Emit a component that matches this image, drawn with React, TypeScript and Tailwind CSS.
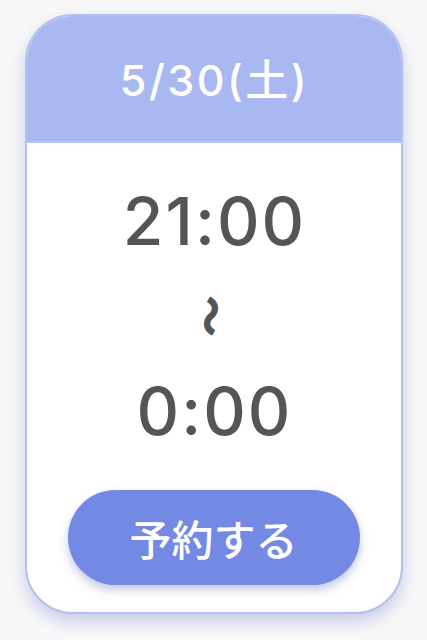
export default function App() {
  return (
    <div
      className="w-[427px] h-[640px] bg-[#f8f8f9] flex justify-center pt-[14px] overflow-hidden antialiased [font-feature-settings:'calt'_0]"
      style={{ fontFamily: 'Inter, "Noto Sans CJK JP", sans-serif' }}
    >
      <div className="w-[378px] h-[600px] rounded-[48px] border-2 border-[#b3bfee] bg-white overflow-hidden flex flex-col shadow-[0_8px_16px_rgba(110,125,200,0.35)]">
        <div className="h-[127px] bg-[#a9b8f1] flex items-center justify-center border-b-2 border-[#b6c2f0] shrink-0">
          <span className="text-white text-[43px] leading-none font-medium tracking-[2.5px] pl-[2px] mt-[4px]">5/30(土)</span>
        </div>
        <div className="flex-1 flex flex-col items-center">
          <div className="mt-[43px] h-[70px] text-[#555555] text-[66px] leading-[70px] font-medium tracking-[2px] pl-[2px]">21:00</div>
          <div className="h-[120px] flex items-center justify-center">
            <span className="text-[#555555] text-[42px] leading-none font-black rotate-90 inline-block" style={{ fontFamily: '"Noto Sans CJK JP", sans-serif' }}>〜</span>
          </div>
          <div className="h-[70px] text-[#555555] text-[66px] leading-[70px] font-medium tracking-[2px] pl-[2px]">0:00</div>
          <button
            className="mt-[44px] w-[292px] h-[95px] shrink-0 rounded-full bg-[#7389e4] text-white text-[42px] font-medium flex items-center justify-center shadow-[0_5px_10px_rgba(90,100,180,0.35)]"
            style={{ fontFamily: '"Noto Sans CJK JP", sans-serif' }}
          >
            予約する
          </button>
        </div>
      </div>
    </div>
  );
}
